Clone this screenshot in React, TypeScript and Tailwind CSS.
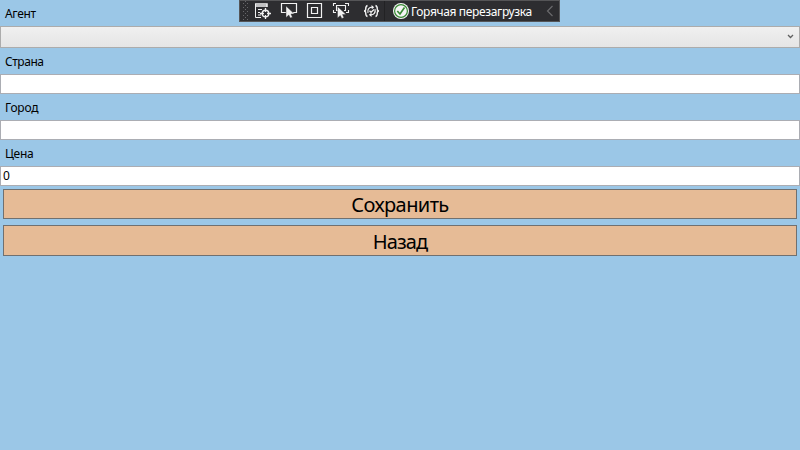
import React from "react";

function Label({ text, spacing }: { text: string; spacing: string }) {
  return (
    <div className="flex h-[26px] items-center pl-[5px] pt-[2px] text-[12px] leading-4">
      <span className={spacing}>{text}</span>
    </div>
  );
}

function Field({ value = "" }: { value?: string }) {
  return (
    <div className="flex h-5 items-center border border-[#abadb3] bg-white pl-[2px] text-[12px] leading-4">
      {value}
    </div>
  );
}

function ActionButton({ text, size }: { text: string; size: string }) {
  return (
    <button
      className={`mx-[3px] flex items-center justify-center border border-[#707070] bg-[#e6bb96] text-[20px] leading-none ${size}`}
    >
      {text}
    </button>
  );
}

function Grip() {
  const rows = [3, 7, 11, 15, 19];
  return (
    <svg className="ml-[3px] h-5 w-[7px] shrink-0" viewBox="0 0 7 20" fill="#68686b" shapeRendering="crispEdges">
      {rows.map((y) => (
        <g key={y}>
          <rect x="0" y={y - 1} width="1" height="1" />
          <rect x="4" y={y - 1} width="1" height="1" />
          <rect x="2" y={y - 3} width="1" height="1" />
        </g>
      ))}
    </svg>
  );
}

function Cursor() {
  return <path d="M0 0V11.5L2.8 9L4.3 12L6.4 11.2L5 8H8.5Z" fill="#f1f1f1" stroke="#2d2d30" strokeWidth=".4" />;
}

function DebugToolbar() {
  return (
    <div className="absolute left-[239px] top-0 flex h-[22px] w-[321px] items-center border border-[#555557] bg-[#2d2d30] text-[12px] leading-4 text-white">
      <Grip />
      <svg className="ml-1 h-5 w-[18px] shrink-0" viewBox="0 0 18 20" fill="none" stroke="#f1f1f1">
        <path d="M1 3H13V6M1 5H13" strokeWidth="1.5" />
        <path d="M1.5 3V16.5H7M4 8.5H8M4 11.5H6M4 14H7" />
        <circle cx="11.5" cy="12.5" r="3.3" strokeWidth="1.4" />
        <path d="M11.5 7V11M11.5 14V18M6 12.5H10M13 12.5H17" strokeWidth="1.3" />
      </svg>
      <svg className="ml-[8px] h-5 w-[18px] shrink-0" viewBox="0 0 18 20" fill="none">
        <path d="M6 11.5H1.5V2.5H16.5V11.5H13" stroke="#f1f1f1" strokeWidth="1.2" />
        <g transform="translate(6 5)"><Cursor /></g>
      </svg>
      <svg className="ml-[8px] h-5 w-[18px] shrink-0" viewBox="0 0 18 20" fill="none" stroke="#f1f1f1">
        <path d="M1.5 2.5H15.5V16.5H1.5ZM5.5 6.5H11.5V12.5H5.5Z" strokeWidth="1.2" />
      </svg>
      <svg className="ml-[8px] h-5 w-[18px] shrink-0" viewBox="0 0 18 20" fill="none">
        <path d="M1.5 5V2.5H4M13 2.5H16.5V5M1.5 9V11.5H4M16.5 9V11.5H14M6 9.5H4.5V4.5H13.5V9.5H12" stroke="#f1f1f1" strokeWidth="1.1" />
        <g transform="translate(5.5 5.5)"><Cursor /></g>
      </svg>
      <svg className="ml-[13px] h-5 w-[18px] shrink-0" viewBox="0 0 18 20" fill="none" stroke="#f1f1f1" strokeWidth="1.4">
        <path d="M4.5 4.5C2.8 5 2.7 6.5 2.7 8C2.7 9.3 2.3 10 1 10C2.3 10 2.7 10.7 2.7 12C2.7 13.5 2.8 15 4.5 15.5M12.5 4.5C14.2 5 14.3 6.5 14.3 8C14.3 9.3 14.7 10 16 10C14.7 10 14.3 10.7 14.3 12C14.3 13.5 14.2 15 12.5 15.5" />
        <path d="M5 11.8C4.2 8.5 6 6 9.8 6.2M12 8.2C12.8 11.5 11 14 7.2 13.8" strokeWidth="1.2" />
        <path d="M8.5 4L11.2 6.3L8.8 8.3ZM8.5 11.8L5.8 13.8L8.5 16Z" fill="#f1f1f1" stroke="none" />
        <path d="M6.5 9.8L8 11.3L11 8.5" strokeWidth="1.3" />
      </svg>
      <svg className="ml-[3px] h-5 w-px shrink-0" viewBox="0 0 1 20">
        <rect width="1" height="20" fill="#222224" />
      </svg>
      <svg className="ml-[7px] h-5 w-[18px] shrink-0" viewBox="0 0 18 20" fill="none">
        <circle cx="9" cy="10" r="8" fill="#f5f5f5" />
        <circle cx="9" cy="10" r="6.4" fill="#f5f5f5" stroke="#388a34" strokeWidth="1.2" />
        <path d="M5.3 10L8 13L12.5 6.5" stroke="#388a34" strokeWidth="1.7" />
      </svg>
      <span className="ml-[1px] w-[122px] shrink-0 whitespace-nowrap pt-px tracking-[-0.35px]">Горячая перезагрузка</span>
      <svg className="ml-[13px] h-5 w-2 shrink-0" viewBox="0 0 8 20" fill="none" stroke="#69696c" strokeWidth="1.2">
        <path d="M6.5 5L1.5 10L6.5 15" />
      </svg>
    </div>
  );
}

export default function App() {
  return (
    <main className="relative h-[450px] w-[800px] overflow-hidden bg-[#9bc7e7] font-['Noto_Sans','Open_Sans',sans-serif] text-black">
      <Label text="Агент" spacing="tracking-[-0.3px]" />
      <div className="flex h-[22px] items-center justify-end border border-[#acacac] bg-linear-to-b from-[#f0f0f0] to-[#e5e5e5] pr-[5px]">
        <svg className="h-5 w-[7px]" viewBox="0 0 7 20" fill="none" stroke="#606060" strokeWidth="1.3">
          <path d="M1 8L3.5 10.5L6 8" />
        </svg>
      </div>
      <Label text="Страна" spacing="tracking-[-0.45px]" />
      <Field />
      <Label text="Город" spacing="tracking-[-0.2px]" />
      <Field />
      <Label text="Цена" spacing="tracking-[-0.3px]" />
      <Field value="0" />
      <div className="flex flex-col gap-[6px] pt-[3px]">
        <ActionButton text="Сохранить" size="h-[30px] pt-px tracking-[-0.6px]" />
        <ActionButton text="Назад" size="h-[31px] pt-[2px] tracking-[-0.9px]" />
      </div>
      <DebugToolbar />
    </main>
  );
}
